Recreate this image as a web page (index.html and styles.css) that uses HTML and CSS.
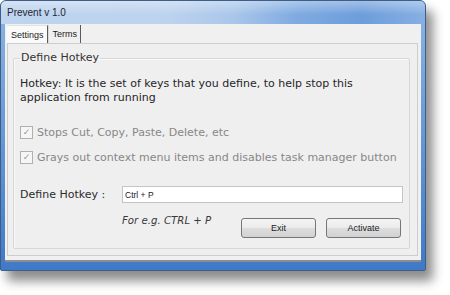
FILE: index.html
```html
<!DOCTYPE html>
<html>
<head>
<meta charset="utf-8">
<title>Prevent v 1.0</title>
<link rel="stylesheet" href="styles.css">
</head>
<body>
<div class="window">
  <div class="titlebar"><span class="title">Prevent v 1.0</span></div>
  <div class="frame">
    <div class="client">
      <div class="tabs">
        <div class="tab active">Settings</div>
        <div class="tab">Terms</div>
      </div>
      <div class="page">
        <fieldset class="group">
          <legend class="legend">Define Hotkey</legend>
          <p class="desc">Hotkey: It is the set of keys that you define, to help stop this application from running</p>
          <div class="check first"><span class="box">✓</span><span>Stops Cut, Copy, Paste, Delete, etc</span></div>
          <div class="check"><span class="box">✓</span><span>Grays out context menu items and disables task manager button</span></div>
          <div class="hotkey-row">
            <span class="label">Define Hotkey :</span>
            <div class="input">Ctrl + P</div>
          </div>
          <div class="bottom-row">
            <span class="hint">For e.g. CTRL + P</span>
            <div class="buttons">
              <button class="btn">Exit</button>
              <button class="btn">Activate</button>
            </div>
          </div>
        </fieldset>
      </div>
    </div>
  </div>
</div>
</body>
</html>
```

FILE: styles.css
```css
html, body {
  margin: 0;
  padding: 0;
  background: #ffffff;
}

body {
  width: 450px;
  height: 295px;
  overflow: hidden;
  font-family: "DejaVu Sans", sans-serif;
}

.window {
  width: 426px;
  height: 271px;
  box-sizing: border-box;
  display: flex;
  flex-direction: column;
  border: 1px solid #3e5e86;
  border-radius: 6px 6px 2px 2px;
  overflow: hidden;
  background: #4b83cc;
  box-shadow: 7px 10px 11px rgba(0, 0, 0, 0.45);
}

.titlebar {
  height: 23px;
  flex: none;
  display: flex;
  align-items: center;
  padding-left: 6px;
  background:
    linear-gradient(to bottom, rgba(255,255,255,0.35), rgba(255,255,255,0) 60%),
    linear-gradient(to right, #bfd4ee 0%, #bcd2ee 40%, #a9c6ea 55%, #7eaae0 70%, #6d9ddb 85%, #86b0e2 100%);
}

.title {
  font-family: "Liberation Sans", sans-serif;
  font-size: 10px;
  color: #1b2535;
}

.frame {
  flex: 1;
  display: flex;
  padding: 0 4px 8px 4px;
  background: linear-gradient(to bottom, #86b0e2 0%, #6a9bd8 40%, #3f79c8 100%);
}

.client {
  flex: 1;
  display: flex;
  flex-direction: column;
  background: #f0f0f0;
  border-bottom: 2px solid #8d8d8d;
}

.tabs {
  display: flex;
  height: 19px;
  padding: 1px 0 0 1px;
  box-sizing: border-box;
  flex: none;
}

.tab {
  font-family: "Liberation Sans", sans-serif;
  font-size: 9px;
  color: #1a1a1a;
  padding: 0 3px 0 4px;
  display: flex;
  align-items: center;
  border-right: 1px solid #5a5a5a;
  border-left: 1px solid #d8d8d8;
}

.tab.active {
  background: #fafafa;
  border-left: 1px solid #f8f8f8;
  border-top: 1px solid #e2e2e2;
}

.page {
  flex: 1;
  margin: 0 3px 4px 2px;
  border: 1px solid #cdcdcd;
  background: #efefef;
  display: flex;
  flex-direction: column;
}

.group {
  margin: 7px 7px 0 5px;
  padding: 0 6px 10px 6px;
  border: 1px solid #d6d6d6;
  border-radius: 2px;
  box-shadow: inset 1px 1px 0 #fafafa;
  min-width: 0;
}

.legend {
  font-size: 11px;
  line-height: 14px;
  color: #333333;
  padding: 0 1px;
  margin-left: 0;
}

.desc {
  margin: 12px 0 0 0;
  font-size: 11px;
  line-height: 14px;
  color: #262626;
}

.check {
  display: flex;
  align-items: center;
  height: 16px;
  margin-top: 9px;
  font-size: 11px;
  color: #878787;
}

.check.first {
  margin-top: 19px;
}

.box {
  width: 11px;
  height: 11px;
  border: 1px solid #b0b0b0;
  background: #f6f6f6;
  margin-right: 4px;
  font-size: 9px;
  line-height: 11px;
  text-align: center;
  color: #9a9a9a;
  flex: none;
}

.hotkey-row {
  display: flex;
  align-items: center;
  margin-top: 21px;
}

.label {
  width: 102px;
  flex: none;
  font-size: 11px;
  color: #2c2c2c;
}

.input {
  flex: 1;
  height: 17px;
  box-sizing: border-box;
  border: 1px solid #c4c4c4;
  background: #ffffff;
  font-family: "Liberation Sans", sans-serif;
  font-size: 8.5px;
  color: #1a1a1a;
  padding: 0 2px;
  display: flex;
  align-items: center;
}

.bottom-row {
  display: flex;
  align-items: flex-start;
  margin-top: 11px;
  padding-left: 102px;
}

.hint {
  font-size: 10.2px;
  font-style: italic;
  line-height: 14px;
  color: #3a3a3a;
}

.buttons {
  margin-left: auto;
  margin-top: 4px;
  margin-right: 2px;
  display: flex;
  gap: 10px;
}

.btn {
  width: 75px;
  height: 20px;
  padding: 0;
  border: 1px solid #767676;
  border-radius: 3px;
  background: linear-gradient(to bottom, #f4f4f4 0%, #ebebeb 50%, #dddddd 51%, #d2d2d2 100%);
  font-family: "Liberation Sans", sans-serif;
  font-size: 9px;
  color: #222222;
}
```
